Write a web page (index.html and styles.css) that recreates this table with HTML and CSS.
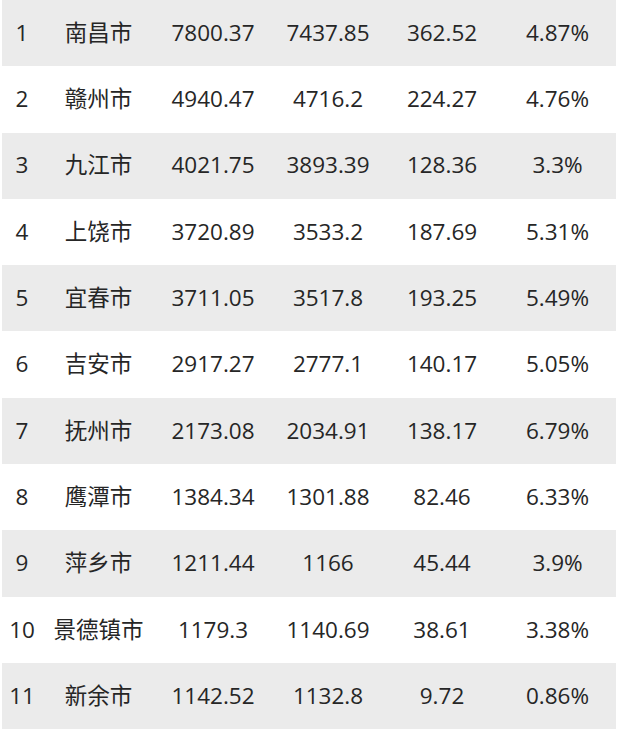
FILE: index.html
```html
<!DOCTYPE html>
<html lang="zh">
<head>
<meta charset="utf-8">
<link rel="stylesheet" href="styles.css">
</head>
<body>
<div class="table">
  <div class="row shade"><span class="c1">1</span><span class="c2">南昌市</span><span class="c3">7800.37</span><span class="c4">7437.85</span><span class="c5">362.52</span><span class="c6">4.87%</span></div>
  <div class="row"><span class="c1">2</span><span class="c2">赣州市</span><span class="c3">4940.47</span><span class="c4">4716.2</span><span class="c5">224.27</span><span class="c6">4.76%</span></div>
  <div class="row shade"><span class="c1">3</span><span class="c2">九江市</span><span class="c3">4021.75</span><span class="c4">3893.39</span><span class="c5">128.36</span><span class="c6">3.3%</span></div>
  <div class="row"><span class="c1">4</span><span class="c2">上饶市</span><span class="c3">3720.89</span><span class="c4">3533.2</span><span class="c5">187.69</span><span class="c6">5.31%</span></div>
  <div class="row shade"><span class="c1">5</span><span class="c2">宜春市</span><span class="c3">3711.05</span><span class="c4">3517.8</span><span class="c5">193.25</span><span class="c6">5.49%</span></div>
  <div class="row"><span class="c1">6</span><span class="c2">吉安市</span><span class="c3">2917.27</span><span class="c4">2777.1</span><span class="c5">140.17</span><span class="c6">5.05%</span></div>
  <div class="row shade"><span class="c1">7</span><span class="c2">抚州市</span><span class="c3">2173.08</span><span class="c4">2034.91</span><span class="c5">138.17</span><span class="c6">6.79%</span></div>
  <div class="row"><span class="c1">8</span><span class="c2">鹰潭市</span><span class="c3">1384.34</span><span class="c4">1301.88</span><span class="c5">82.46</span><span class="c6">6.33%</span></div>
  <div class="row shade"><span class="c1">9</span><span class="c2">萍乡市</span><span class="c3">1211.44</span><span class="c4">1166</span><span class="c5">45.44</span><span class="c6">3.9%</span></div>
  <div class="row"><span class="c1">10</span><span class="c2">景德镇市</span><span class="c3">1179.3</span><span class="c4">1140.69</span><span class="c5">38.61</span><span class="c6">3.38%</span></div>
  <div class="row shade"><span class="c1">11</span><span class="c2">新余市</span><span class="c3">1142.52</span><span class="c4">1132.8</span><span class="c5">9.72</span><span class="c6">0.86%</span></div>
</div>
</body>
</html>
```
FILE: styles.css
```css
html, body {
  margin: 0;
  padding: 0;
  background: #ffffff;
}
body {
  width: 622px;
  height: 736px;
  overflow: hidden;
  font-family: "Open Sans", "Noto Sans CJK SC", sans-serif;
  color: #262626;
}
.table {
  display: flex;
  flex-direction: column;
  padding: 0 6px 0 2px;
}
.row {
  display: grid;
  grid-template-columns: 40px 113px 116px 114px 114px 117px;
  align-items: center;
  height: 66.3px;
  font-size: 22.5px;
  line-height: 1;
}
.row.shade {
  background: #ebebeb;
}
.row span {
  text-align: center;
  white-space: nowrap;
}
```
